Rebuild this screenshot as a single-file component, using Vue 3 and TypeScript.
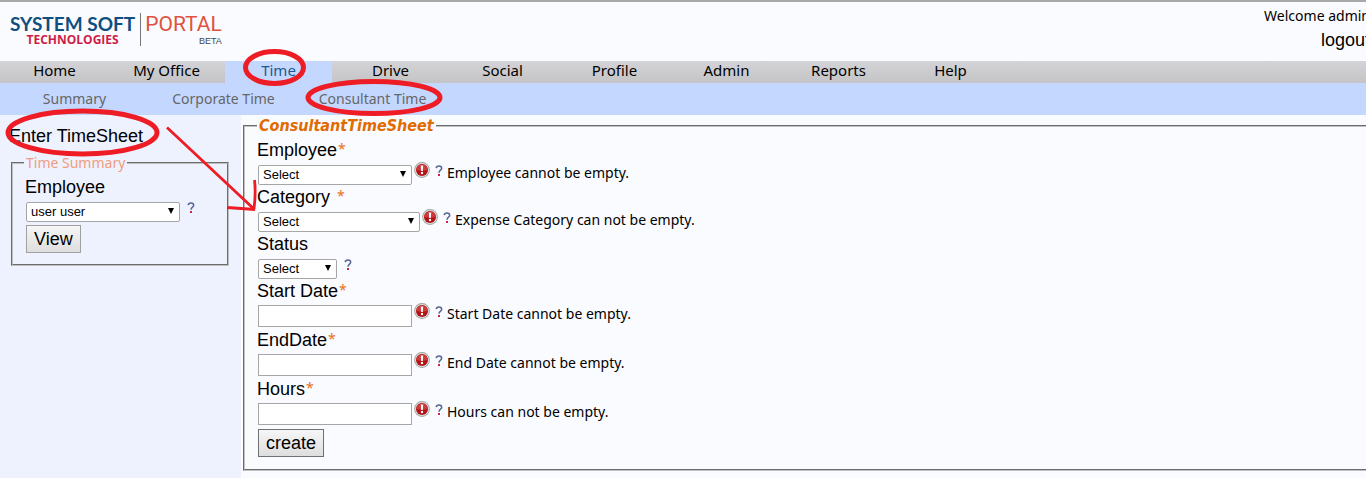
<script setup lang="ts">
import { ref } from 'vue'

interface Field {
  id: string
  label: string
  kind: 'select' | 'text'
  size: 'short' | 'medium' | 'long'
  required: boolean
  spaced?: boolean
  error?: string
}

const menu: string[] = ['Home', 'My Office', 'Time', 'Drive', 'Social', 'Profile', 'Admin', 'Reports', 'Help']
const submenu: string[] = ['Summary', 'Corporate Time', 'Consultant Time']
const active = ref('Time')

const fields: Field[] = [
  { id: 'employee', label: 'Employee', kind: 'select', size: 'medium', required: true, error: 'Employee cannot be empty.' },
  { id: 'category', label: 'Category', kind: 'select', size: 'long', required: true, spaced: true, error: 'Expense Category can not be empty.' },
  { id: 'status', label: 'Status', kind: 'select', size: 'short', required: false },
  { id: 'start', label: 'Start Date', kind: 'text', size: 'medium', required: true, error: 'Start Date cannot be empty.' },
  { id: 'end', label: 'EndDate', kind: 'text', size: 'medium', required: true, error: 'End Date cannot be empty.' },
  { id: 'hours', label: 'Hours', kind: 'text', size: 'medium', required: true, error: 'Hours can not be empty.' },
]
</script>

<template>
  <div class="page">
    <header class="header">
      <div class="logo">
        <div class="company">
          <span class="company-name">SYSTEM SOFT</span>
          <span class="company-sub">TECHNOLOGIES</span>
        </div>
        <div class="product">
          <span class="product-name">PORTAL</span>
          <span class="product-tag">BETA</span>
        </div>
      </div>
      <div class="account">
        <span class="welcome">Welcome admin</span>
        <a class="logout" href="#">logout</a>
      </div>
    </header>

    <nav class="menu">
      <a v-for="item in menu" :key="item" href="#" class="menu-item" :class="{ active: item === active }" @click.prevent="active = item">{{ item }}</a>
    </nav>
    <nav class="submenu">
      <a v-for="item in submenu" :key="item" href="#" class="submenu-item">{{ item }}</a>
    </nav>

    <div class="body">
      <aside class="sidebar">
        <h1 class="heading">Enter TimeSheet</h1>
        <fieldset class="box side-box">
          <legend class="side-legend">Time Summary</legend>
          <label class="label" for="summary-employee">Employee</label>
          <div class="control">
            <span class="picker medium">
              <select id="summary-employee"><option>user user</option></select>
              <i class="arrow"></i>
            </span>
            <svg class="help" viewBox="0 0 8 12"><path d="M1.2 3.2C1.4 1.4 2.6 1 4 1c1.600 0 2.700.8 2.700 2.300C6.700 5.200 4 5.200 4 7.800" /><rect x="3" y="9" width="2" height="2" /></svg>
          </div>
          <button type="button" class="btn view">View</button>
        </fieldset>
      </aside>

      <main class="main">
        <form @submit.prevent>
          <fieldset class="box form-box">
            <legend class="form-legend">ConsultantTimeSheet</legend>
            <div v-for="f in fields" :key="f.id" class="field">
              <label class="label" :for="f.id">{{ f.label }}<span v-if="f.required" class="star" :class="{ spaced: f.spaced }">*</span></label>
              <div class="control">
                <span v-if="f.kind === 'select'" class="picker" :class="f.size">
                  <select :id="f.id"><option>Select</option></select>
                  <i class="arrow"></i>
                </span>
                <input v-else :id="f.id" type="text" class="text" :class="f.size" />
                <svg v-if="f.error" class="alert" viewBox="0 0 16 16">
                  <circle cx="8" cy="8" r="7.900" fill="#a0a0a0" />
                  <circle cx="8" cy="8" r="7" fill="#dedede" />
                  <circle cx="8" cy="8" r="6" fill="#b31217" />
                  <path d="M2.500 8a5.500 5.500 0 0 1 11 0Q8 9.500 2.500 8z" fill="#cf3a3a" />
                  <path d="M6.800 3.500h2.400L8.800 9H7.200z" fill="#fff" />
                  <circle cx="8" cy="11" r="1.200" fill="#fff" />
                </svg>
                <svg class="help" viewBox="0 0 8 12"><path d="M1.2 3.2C1.4 1.4 2.6 1 4 1c1.600 0 2.700.8 2.700 2.300C6.700 5.200 4 5.200 4 7.800" /><rect x="3" y="9" width="2" height="2" /></svg>
                <span v-if="f.error" class="message">{{ f.error }}</span>
              </div>
            </div>
            <button type="submit" class="btn create">create</button>
          </fieldset>
        </form>
      </main>
    </div>

    <svg class="marks" width="460" height="240" viewBox="0 0 460 240">
      <ellipse cx="274.500" cy="67.500" rx="29" ry="16" stroke-width="5" />
      <ellipse cx="374" cy="97.500" rx="66" ry="16" stroke-width="5" />
      <ellipse cx="82.500" cy="132.500" rx="74.500" ry="21.500" stroke-width="5" />
      <path d="M167 127.500L254 209M227 207.500L255 209.500M254.500 180Q256 193 254 209" stroke-width="2.800" />
    </svg>
  </div>
</template>

<style>
body { margin: 0; }
</style>

<style scoped>
.page {
  position: relative;
  display: flex;
  flex-direction: column;
  min-height: 100vh;
  overflow: hidden;
  background: #fafbff;
  color: #000;
  font: 14px/20px "Noto Sans", "DejaVu Sans Condensed", sans-serif;
}
a { text-decoration: none; color: inherit; }

.header {
  display: flex;
  justify-content: space-between;
  box-sizing: border-box;
  height: 61px;
  border-top: 2px solid #a8a8a8;
}
.logo { display: flex; align-items: flex-start; padding: 11px 0 0 10px; }
.company { display: flex; flex-direction: column; align-items: center; padding-right: 5px; border-right: 1px solid #777; }
.company-name { font: 700 19px/21px Lato, sans-serif; color: #0e4f80; }
.company-sub { font: 700 12px/12px "Open Sans", sans-serif; color: #d01c45; }
.product { display: flex; flex-direction: column; align-items: flex-end; padding-left: 4px; }
.product-name { font: 21px/23px Roboto, sans-serif; color: #e0523f; }
.product-tag { font: 9px/10px "Liberation Sans", sans-serif; color: #444; }
.account { display: flex; flex-direction: column; margin-right: -4px; text-align: right; }
.welcome { line-height: 27px; }
.logout { font: 18px/22px "Liberation Sans", sans-serif; }

.menu {
  display: flex;
  gap: 5px;
  height: 22px;
  padding-left: 1px;
  background: linear-gradient(#d4d4d8, #c4c4c6);
}
.menu-item { width: 107px; text-align: center; font-size: 15px; line-height: 18px; }
.menu-item.active { background: #c4d7ff; color: #1c5a94; }
.submenu { display: flex; height: 32px; background: #c4d7ff; }
.submenu-item { width: 149px; text-align: center; line-height: 32px; color: #666; font-size: 14px; }

.body { flex: 1; display: grid; grid-template-columns: 241px minmax(0, 1fr); }
.sidebar { background: #eef2fe; padding-right: 12px; }
.heading { margin: 10px 0 7px 9px; font: 18px/22px "Liberation Sans", sans-serif; }
.box { box-sizing: border-box; min-width: 0; margin: 0; padding: 1px 12px 11px; border: 2px groove #c0c0c0; }
.side-box { margin-left: 11px; padding-top: 3px; }
.side-legend { padding: 0 2px; margin-left: -1px; color: #f09c80; line-height: 18px; }
.main { padding: 0 0 0 2px; }
.form-box { margin-right: -4px; padding-bottom: 12px; }
.form-legend { padding: 0 2px; font: italic bold 16px/22px "DejaVu Sans Condensed", "Noto Sans", sans-serif; color: #e06c00; }

.label { display: block; height: 24px; font: 18px/25px "Liberation Sans", sans-serif; }
.star { margin-left: 1px; color: #e8701a; font: 14px/14px "Noto Sans", sans-serif; vertical-align: 2px; }
.star.spaced { margin-left: 7px; }
.control { display: flex; align-items: flex-start; padding: 2px 0 1px 1px; }
.picker { position: relative; height: 20px; }
.picker select {
  appearance: none;
  width: 100%;
  height: 20px;
  padding: 0 4px;
  border: 1px solid #a6a6a6;
  border-radius: 2px;
  background: #fff;
  color: #000;
  font: 13px/18px "Liberation Sans", sans-serif;
}
.arrow {
  position: absolute;
  top: 7px;
  right: 6px;
  border: solid transparent;
  border-width: 6px 3px 0;
  border-top-color: #000;
  pointer-events: none;
}
.text { box-sizing: border-box; height: 22px; border: 1px solid #a6a6a6; background: #fff; font: 13px "Liberation Sans", sans-serif; }
.short { width: 79px; }
.medium { width: 154px; }
.long { width: 162px; }
.alert { width: 16px; height: 16px; margin: -2px -2px 0 2px; }
.help { width: 8px; height: 12px; margin: 1px 0 0 7px; }
.help path { fill: none; stroke: #5a6796; stroke-width: 1.5; }
.help rect { fill: #cc2244; }
.message { margin: -1px 0 -1px 4px; line-height: 20px; white-space: nowrap; }
.btn {
  display: block;
  height: 28px;
  margin: 3px 0 0 1px;
  padding: 0 7px;
  border: 1px solid #a0a0a0;
  background: linear-gradient(#f6f6f6, #dedede);
  color: #000;
  font: 18px/24px "Liberation Sans", sans-serif;
}
.create { border-color: #707070; }

.marks { position: absolute; top: 0; left: 0; fill: none; stroke: #ee1c25; pointer-events: none; }
</style>
